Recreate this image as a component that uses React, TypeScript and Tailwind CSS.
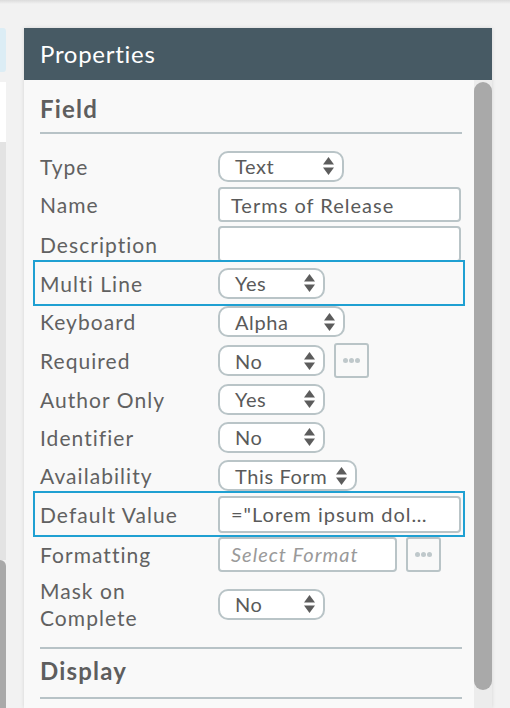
import React from 'react'

const FONT = { fontFamily: 'Lato, "Open Sans", sans-serif' }

function Arrows(): React.JSX.Element {
  return (
    <svg width="11" height="18" viewBox="0 0 11 18" className="shrink-0">
      <path d="M5.5 0 L11 7.5 L0 7.5 Z" fill="#5c5c5c" />
      <path d="M0 10.5 L11 10.5 L5.5 18 Z" fill="#5c5c5c" />
    </svg>
  )
}

function Select({ value, width }: { value: string; width: number }): React.JSX.Element {
  return (
    <div
      className="h-[31px] flex items-center bg-white border-2 border-[#b9c4c7] rounded-[10px] pl-[15px] pr-[8px] text-[20px] tracking-[0.03em] text-[#5a5a5a]"
      style={{ width }}
    >
      <span className="flex-1 leading-none whitespace-nowrap">{value}</span>
      <Arrows />
    </div>
  )
}

function Input({
  value,
  width = 243,
  height = 35,
  placeholder
}: {
  value?: string
  width?: number
  height?: number
  placeholder?: string
}): React.JSX.Element {
  return (
    <div
      className="flex items-center bg-white border-2 border-[#b9c4c7] rounded-[4px] pl-[11px] pr-[8px] text-[20px] tracking-[0.05em] overflow-hidden whitespace-nowrap"
      style={{ width, height }}
    >
      {value ? (
        <span className="text-[#5a5a5a] leading-none">{value}</span>
      ) : (
        <span className="text-[#9a9a9a] italic leading-none">{placeholder}</span>
      )}
    </div>
  )
}

function Dots(): React.JSX.Element {
  return (
    <div className="w-[35px] h-[35px] border-2 border-[#b9c4c7] rounded-[3px] flex items-center justify-center gap-[1px] ml-[9px]">
      <span className="w-[5px] h-[5px] rounded-full bg-[#bfc8cb]" />
      <span className="w-[5px] h-[5px] rounded-full bg-[#bfc8cb]" />
      <span className="w-[5px] h-[5px] rounded-full bg-[#bfc8cb]" />
    </div>
  )
}

const LABEL = 'w-[178px] text-[21px] leading-[27px] tracking-[0.05em] text-[#616161]'

function Row({
  label,
  height,
  children
}: {
  label: React.ReactNode
  height: number
  children: React.ReactNode
}): React.JSX.Element {
  return (
    <div className="flex items-center" style={{ height }}>
      <div className={LABEL}>{label}</div>
      <div className="flex items-center">{children}</div>
    </div>
  )
}

function Highlight({
  label,
  mb,
  children
}: {
  label: string
  mb: number
  children: React.ReactNode
}): React.JSX.Element {
  return (
    <div
      className="flex items-center h-[46px] -mt-[4px] -ml-[7px] -mr-[3px] pl-[5px] border-2 border-[#1fa0d2]"
      style={{ marginBottom: -mb }}
    >
      <div className={LABEL}>{label}</div>
      <div className="flex items-center">{children}</div>
    </div>
  )
}

export default function App(): React.JSX.Element {
  return (
    <div className="w-[510px] h-[708px] bg-[#f2f2f2] overflow-hidden relative" style={FONT}>
      <div className="absolute top-0 left-0 right-0 h-[4px] bg-gradient-to-b from-[#dcdcdc] to-[#f2f2f2]" />

      <div className="flex h-full">
        {/* edge of the neighbouring panel */}
        <div className="w-[6px] flex flex-col pt-[28px]">
          <div className="h-[44px] bg-[#dcedf5] rounded-r-[3px]" />
          <div className="h-[10px]" />
          <div className="h-[60px] bg-white" />
          <div className="h-[418px] bg-[#e3e3e3]" />
          <div className="flex-1 bg-[#a9a9a9] rounded-tr-[6px]" />
        </div>

        {/* Properties panel */}
        <div className="ml-[18px] mt-[28px] w-[468px] flex flex-col shadow-[0_0_4px_rgba(0,0,0,0.12)]">
          <div className="h-[52px] bg-[#475a64] flex items-center pl-[16px] text-white text-[24px] tracking-[0.03em] leading-none">
            Properties
          </div>

          <div className="flex-1 flex bg-[#f9f9f9]">
            <div className="flex-1 pl-[16px] pr-[12px] flex flex-col">
              <div className="pt-[15px] pb-[9px] border-b-2 border-[#b8c3c7] text-[24px] leading-[28px] tracking-[0.05em] font-bold text-[#5e5e5e]">
                Field
              </div>

              <div className="h-[13px]" />
              <Row label="Type" height={38}>
                <Select value="Text" width={126} />
              </Row>
              <Row label="Name" height={39}>
                <Input value="Terms of Release" />
              </Row>
              <Row label="Description" height={40}>
                <Input height={36} />
              </Row>
              <Highlight label="Multi Line" mb={4}>
                <Select value="Yes" width={107} />
              </Highlight>
              <Row label="Keyboard" height={39}>
                <Select value="Alpha" width={127} />
              </Row>
              <Row label="Required" height={39}>
                <Select value="No" width={107} />
                <Dots />
              </Row>
              <Row label="Author Only" height={38}>
                <Select value="Yes" width={107} />
              </Row>
              <Row label="Identifier" height={38}>
                <Select value="No" width={107} />
              </Row>
              <Row label="Availability" height={39}>
                <Select value="This Form" width={139} />
              </Row>
              <Highlight label="Default Value" mb={2}>
                <Input value={'="Lorem ipsum dol…'} height={37} />
              </Highlight>
              <Row label="Formatting" height={38}>
                <Input placeholder="Select Format" width={179} />
                <Dots />
              </Row>
              <Row
                label={
                  <>
                    Mask on
                    <br />
                    Complete
                  </>
                }
                height={62}
              >
                <Select value="No" width={107} />
              </Row>

              <div className="mt-[12px] border-t-2 border-[#b8c3c7] pt-[8px] pb-[12px] text-[24px] leading-[28px] tracking-[0.05em] font-bold text-[#5e5e5e]">
                Display
              </div>
              <div className="border-t-2 border-[#b8c3c7]" />
            </div>

            {/* scrollbar */}
            <div className="w-[18px] bg-[#ececec] pt-[2px]">
              <div className="h-[608px] bg-[#a9a9a9] rounded-full" />
            </div>
          </div>
        </div>
      </div>
    </div>
  )
}
